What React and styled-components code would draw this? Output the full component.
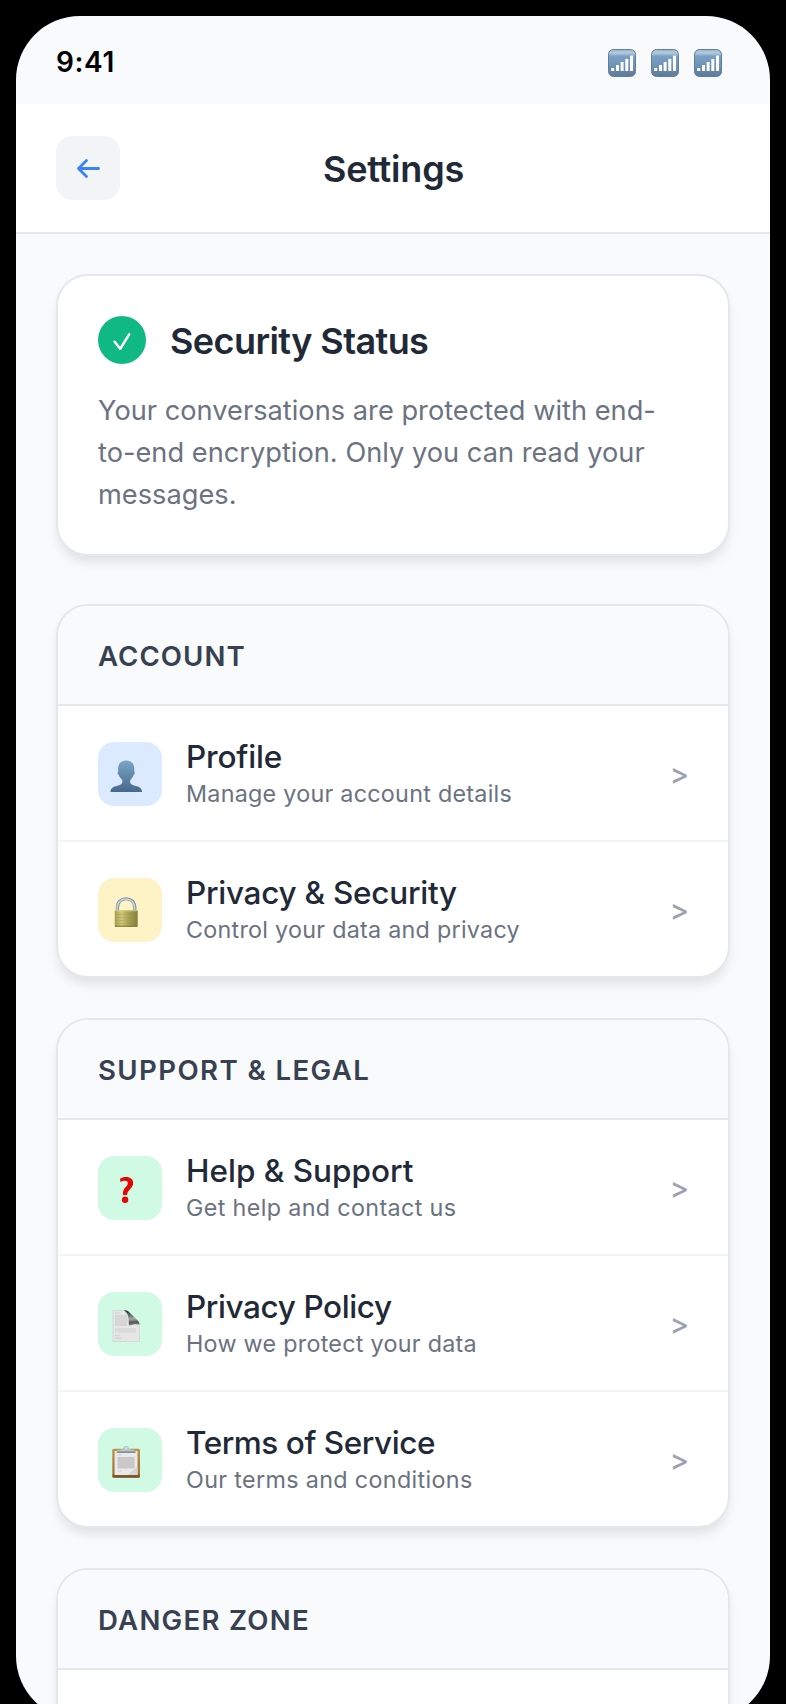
import React from "react";
import styled, { createGlobalStyle } from "styled-components";

const GlobalStyle = createGlobalStyle`
  * { box-sizing: border-box; }
  html, body { margin: 0; background: #000; }
  html { overflow: hidden; }
  body {
    height: 1704px;
    overflow: hidden;
    font-family: Inter, "Liberation Sans", sans-serif;
    color: #1f2937;
    -webkit-font-smoothing: antialiased;
  }
`;

const Frame = styled.div`
  width: 786px;
  padding: 16px;
  background: #000;
`;

const Screen = styled.div`
  height: 1704px;
  border-radius: 64px;
  overflow: hidden;
  background: #f9fafc;
`;

const StatusBar = styled.div`
  height: 88px;
  padding: 4px 48px 0 40px;
  display: flex;
  align-items: center;
  justify-content: space-between;
`;

const Clock = styled.span`
  font-size: 28px;
  font-weight: 600;
  line-height: 34px;
  letter-spacing: 0.6px;
  color: #000;
`;

const StatusIcons = styled.div`
  display: flex;
  gap: 15px;
  padding-top: 2px;
`;

const Header = styled.header`
  height: 130px;
  padding: 32px 40px;
  display: grid;
  grid-template-columns: 64px 1fr 64px;
  background: #fff;
  border-bottom: 2px solid #e5e7eb;
`;

const BackButton = styled.button`
  width: 64px;
  height: 64px;
  padding: 0;
  border: 0;
  border-radius: 16px;
  background: #f3f4f6;
`;

const PageTitle = styled.h1`
  margin: 0;
  padding: 1px 0 0 1px;
  font-size: 36px;
  font-weight: 600;
  line-height: 64px;
  letter-spacing: -0.2px;
  text-align: center;
`;

const Content = styled.main`
  padding: 40px;
  display: flex;
  flex-direction: column;
  gap: 40px;
`;

const Card = styled.section`
  border: 2px solid #e5e7eb;
  border-radius: 32px;
  overflow: hidden;
  flex-shrink: 0;
  background: #fff;
  box-shadow: 0 8px 12px -2px rgba(0, 0, 0, 0.1);
`;

const StatusCard = styled(Card)`
  height: 282px;
  margin-bottom: 8px;
  padding: 40px;
`;

const StatusHeading = styled.div`
  display: flex;
  gap: 24px;
`;

const CheckBadge = styled.div`
  width: 48px;
  height: 48px;
  border-radius: 50%;
  background: #10b981;
`;

const StatusTitle = styled.h2`
  margin: 0;
  padding-top: 2px;
  font-size: 36px;
  font-weight: 600;
  line-height: 47px;
  letter-spacing: -0.58px;
`;

const StatusText = styled.p`
  margin: 25px 0 0;
  font-size: 27.2px;
  line-height: 42px;
  letter-spacing: 0.02px;
  color: #6b7280;
`;

const SectionTitle = styled.h3`
  height: 100px;
  margin: 0;
  padding: 32px 38px 30px 40px;
  font-size: 27.6px;
  font-weight: 600;
  line-height: 36px;
  letter-spacing: ${(p) => p.$tracking}px;
  color: #374151;
  background: #f9fafc;
  border-bottom: 2px solid #e5e7eb;
`;

const Row = styled.div`
  padding: 32px 40px;
  display: flex;
  align-items: center;

  & + & {
    border-top: 2px solid #f3f4f6;
  }
`;

const tints = { blue: "#dbeafe", yellow: "#fef3c7", green: "#d1fae5" };

const IconTile = styled.div`
  width: 64px;
  height: 64px;
  margin: 4px 0 2px;
  border-radius: 16px;
  background: ${(p) => tints[p.$tint]};
`;

const RowText = styled.div`
  flex: 1;
  margin-left: 24px;
`;

const RowTitle = styled.div`
  font-size: 31.5px;
  font-weight: 500;
  line-height: 38px;
  letter-spacing: ${(p) => p.$tracking}px;
`;

const RowSubtitle = styled.div`
  margin-top: 4px;
  font-size: 23.3px;
  line-height: 28px;
  letter-spacing: ${(p) => p.$tracking}px;
  color: #6b7280;
`;

const Chevron = styled.span`
  padding-top: 1px;
  font-size: 29px;
  font-weight: 450;
  line-height: 34px;
  margin-right: -1px;
  color: #9ca3af;
`;

const SignalIcon = () => (
  <svg width="28" height="28" viewBox="0 0 28 28">
    <defs>
      <linearGradient id="signal" x1="0" y1="0" x2="0" y2="1">
        <stop offset="0" stopColor="#9bb6cf" />
        <stop offset="0.13" stopColor="#b3cbdc" />
        <stop offset="0.25" stopColor="#7c9fc4" />
        <stop offset="0.55" stopColor="#7195ba" />
        <stop offset="1" stopColor="#5d7a98" />
      </linearGradient>
    </defs>
    <rect x="0.5" y="0.5" width="27" height="27" rx="5" fill="url(#signal)" stroke="#607f9e" />
    <g fill="#fff">
      <rect x="3.2" y="19" width="3" height="3" />
      <rect x="8" y="16" width="3" height="6" />
      <rect x="12.6" y="13" width="3" height="9" />
      <rect x="17.3" y="10" width="3" height="12" />
      <rect x="22" y="6.6" width="3" height="15.4" />
    </g>
  </svg>
);

const BackArrow = () => (
  <svg width="64" height="64" viewBox="0 0 64 64" fill="none" stroke="#3b82f6" strokeWidth="2.8" strokeLinecap="round" strokeLinejoin="round">
    <path d="M42.5 32.5H22.5M30.5 24.5L22.5 32.5L30.5 40.5" />
  </svg>
);

const Check = () => (
  <svg width="48" height="48" viewBox="0 0 48 48" fill="none" stroke="#fff" strokeWidth="2.5" strokeLinecap="round" strokeLinejoin="round">
    <path d="M16.6 25.8L22.2 32.8L31.2 18.4" />
  </svg>
);

const PersonIcon = () => (
  <svg width="64" height="64" viewBox="0 0 64 64">
    <defs>
      <linearGradient id="person" x1="0" y1="18" x2="0" y2="50" gradientUnits="userSpaceOnUse">
        <stop offset="0" stopColor="#7ca7c6" />
        <stop offset="1" stopColor="#46688d" />
      </linearGradient>
    </defs>
    <path
      fill="url(#person)"
      d="M28.2 18.4C33.3 18.4 36.4 21.8 36.3 27L36.1 29.2C37.2 29.1 36.8 32.8 35.6 33.1C35 35.4 33.5 36.6 32.3 37.9C31.7 40.7 32.5 42.3 35.3 43.2C40 44.6 43.8 44.6 44 50H12.5C12.7 44.6 16.4 44.6 21.1 43.2C24 42.3 24.8 40.7 24.2 37.9C23 36.6 21.4 35.4 20.8 33.1C19.6 32.8 19.2 29.1 20.3 29.2L20.1 27C20 21.8 23.1 18.4 28.2 18.4Z"
    />
  </svg>
);

const LockIcon = () => (
  <svg width="64" height="64" viewBox="0 0 64 64">
    <defs>
      <linearGradient id="brass" x1="0" y1="0" x2="1" y2="0">
        <stop offset="0" stopColor="#a9a04f" />
        <stop offset="0.3" stopColor="#cdc777" />
        <stop offset="0.6" stopColor="#aaa253" />
        <stop offset="1" stopColor="#85803a" />
      </linearGradient>
    </defs>
    <path d="M19.4 33V29.5C19.4 17.8 36.8 17.8 36.8 29.5V33" fill="none" stroke="#7f8b98" strokeWidth="3.2" />
    <path d="M19.2 33V29.5C19.4 18.2 36.4 18.2 36.6 29.5V33" fill="none" stroke="#c9d3dd" strokeWidth="1.6" />
    <rect x="16.7" y="32.2" width="23" height="16.5" rx="1" fill="url(#brass)" />
    <path d="M17 32.8H39.4" stroke="#d8d391" strokeWidth="0.8" />
    <path d="M17 36.5H39.4M17 39.5H39.4M17 42.5H39.4M17 45.5H39.4" stroke="#8f8840" strokeOpacity="0.35" strokeWidth="0.7" />
    <path d="M17 48.2H39.4" stroke="#77702e" strokeWidth="1" />
  </svg>
);

const QuestionIcon = () => (
  <svg width="64" height="64" viewBox="0 0 64 64" fill="#e60505">
    <path d="M22 22.7C24 21.5 25.8 21 27.9 21C32.6 21 35.2 23.4 35.2 27.1C35.2 30.2 33.4 32 31.4 33.9C29.8 35.5 29.2 36.6 29.3 39H24.9C24.7 35.5 25.5 33.6 27.2 31.6C28.8 29.8 29.8 28.8 29.8 26.9C29.8 25.4 28.8 24.7 27 24.7C25.4 24.7 24.1 25.1 22.5 26Z" />
    <circle cx="27.1" cy="43.7" r="3.2" />
  </svg>
);

const PageIcon = () => (
  <svg width="64" height="64" viewBox="0 0 64 64">
    <defs>
      <linearGradient id="curl" x1="32" y1="20" x2="33" y2="34" gradientUnits="userSpaceOnUse">
        <stop offset="0" stopColor="#3a3c3b" />
        <stop offset="0.5" stopColor="#a2a6a4" />
        <stop offset="0.75" stopColor="#555" />
        <stop offset="1" stopColor="#999" />
      </linearGradient>
    </defs>
    <path d="M15 18.5H27L31 33L41.4 31V49.5H15Z" fill="#e6e6e6" stroke="#c8cccb" strokeWidth="0.6" />
    <rect x="17" y="23" width="12" height="11" fill="#d6d6d6" />
    <rect x="17" y="36" width="21" height="4.5" fill="#dadada" />
    <path d="M26 18.4C28.5 18.2 29.8 18.9 31 20L40 28.8C41 29.8 41.4 30.8 41.4 32.7C38.5 31.8 34.5 32 31 33.8C30.7 26 30.5 20.5 26 18.4Z" fill="url(#curl)" />
    <path d="M17 21H21.5M17 43.7H22M17 46.2H24" stroke="#c4c4c4" strokeWidth="0.7" />
  </svg>
);

const ClipboardIcon = () => (
  <svg width="64" height="64" viewBox="0 0 64 64">
    <defs>
      <linearGradient id="board" x1="0" y1="0" x2="0" y2="1">
        <stop offset="0" stopColor="#bd924e" />
        <stop offset="0.85" stopColor="#a77232" />
        <stop offset="1" stopColor="#68401b" />
      </linearGradient>
    </defs>
    <rect x="14.3" y="20.8" width="27.7" height="29" rx="1.5" fill="url(#board)" />
    <rect x="16.6" y="23" width="22.9" height="24" fill="#e9e9e9" />
    <path d="M39.5 38V47H30Z" fill="#d4d6d8" />
    <rect x="19.5" y="29" width="17" height="11.5" fill="#c8c8c8" />
    <path d="M19.5 27H23.5M19.5 43H24" stroke="#c4c4c4" strokeWidth="0.7" />
    <path d="M18.8 25V22.5C22 21.7 24.7 21.5 25.5 20C25.7 17.4 30.5 17.4 30.7 20C31.5 21.5 34.3 21.7 37.5 22.5V25Z" fill="#b9c3c9" />
    <circle cx="28.1" cy="20.2" r="1" fill="#d1fae5" />
    <path d="M18.8 24.2H37.5" stroke="#777b7e" strokeWidth="1.3" />
  </svg>
);

const sections = [
  {
    title: "ACCOUNT",
    tracking: 1.05,
    rows: [
      { title: "Profile", tracking: -0.15, subtitle: "Manage your account details", subTracking: 0.27, tint: "blue", Icon: PersonIcon },
      { title: "Privacy & Security", tracking: -0.26, subtitle: "Control your data and privacy", subTracking: 0.27, tint: "yellow", Icon: LockIcon },
    ],
  },
  {
    title: "SUPPORT & LEGAL",
    tracking: 1.4,
    rows: [
      { title: "Help & Support", tracking: 0, subtitle: "Get help and contact us", subTracking: 0.36, tint: "green", Icon: QuestionIcon },
      { title: "Privacy Policy", tracking: -0.4, subtitle: "How we protect your data", subTracking: 0.28, tint: "green", Icon: PageIcon },
      { title: "Terms of Service", tracking: -0.45, subtitle: "Our terms and conditions", subTracking: 0.35, tint: "green", Icon: ClipboardIcon },
    ],
  },
  { title: "DANGER ZONE", tracking: 1.25, rows: [] },
];

const BlankRow = styled.div`
  height: 134px;
`;

export default function App() {
  return (
    <>
      <GlobalStyle />
      <Frame>
        <Screen>
          <StatusBar>
            <Clock>9:41</Clock>
            <StatusIcons>
              <SignalIcon />
              <SignalIcon />
              <SignalIcon />
            </StatusIcons>
          </StatusBar>
          <Header>
            <BackButton aria-label="Back">
              <BackArrow />
            </BackButton>
            <PageTitle>Settings</PageTitle>
          </Header>
          <Content>
            <StatusCard>
              <StatusHeading>
                <CheckBadge>
                  <Check />
                </CheckBadge>
                <StatusTitle>Security Status</StatusTitle>
              </StatusHeading>
              <StatusText>
                Your conversations are protected with end-to-end encryption. Only you can read your messages.
              </StatusText>
            </StatusCard>
            {sections.map((section) => (
              <Card key={section.title}>
                <SectionTitle $tracking={section.tracking}>{section.title}</SectionTitle>
                {section.rows.length === 0 && <BlankRow />}
                {section.rows.map(({ title, tracking, subtitle, subTracking, tint, Icon }) => (
                  <Row key={title}>
                    <IconTile $tint={tint}>
                      <Icon />
                    </IconTile>
                    <RowText>
                      <RowTitle $tracking={tracking}>{title}</RowTitle>
                      <RowSubtitle $tracking={subTracking}>{subtitle}</RowSubtitle>
                    </RowText>
                    <Chevron>&gt;</Chevron>
                  </Row>
                ))}
              </Card>
            ))}
          </Content>
        </Screen>
      </Frame>
    </>
  );
}
